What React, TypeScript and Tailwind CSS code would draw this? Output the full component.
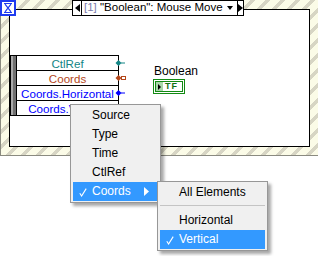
import React from "react";

function Check({ className }: { className?: string }) {
  return (
    <svg className={className} width="8" height="9" viewBox="0 0 8 9">
      <path d="M0.8 5.2 L2.6 8 L7.2 0.6" stroke="currentColor" strokeWidth="1.1" fill="none" />
    </svg>
  );
}

function Item({ label, hl, check, arrow }: { label: string; hl?: boolean; check?: boolean; arrow?: boolean }) {
  return (
    <div
      className={
        "relative h-[19px] leading-[19px] pl-[19px] whitespace-nowrap " +
        (hl ? "bg-[#3399ff] text-white" : "text-black")
      }
    >
      {check && <Check className="absolute left-[6px] top-[6px] text-white" />}
      {label}
      {arrow && (
        <svg className="absolute right-[9px] top-[5px]" width="5" height="9" viewBox="0 0 5 9">
          <path d="M0 0 L5 4.5 L0 9 Z" fill="#fff" />
        </svg>
      )}
    </div>
  );
}

export default function App() {
  return (
    <div className="relative w-[322px] h-[256px] bg-white overflow-hidden font-['Liberation_Sans',Arial,sans-serif] text-[12px] text-black">
      {/* structure frame */}
      <div className="absolute left-0 top-0 w-[318px] h-[156px] border-l border-b border-[#8a8a80] bg-[repeating-linear-gradient(135deg,#fbfbe7_0px,#fbfbe7_6.6px,#d7d5c4_6.6px,#d7d5c4_10.6px)]">
        <div className="absolute left-[8px] top-[9px] w-[301px] h-[138px] bg-white border border-black" />
      </div>

      {/* event icon */}
      <svg className="absolute left-0 top-0" width="16" height="16" viewBox="0 0 16 16">
        <rect width="16" height="16" fill="#1f3cf0" />
        <rect x="2" y="2" width="12" height="12" fill="#fff" />
        <path d="M4 3.5h8M4 12.5h8M5 4.2l6 7.6M11 4.2l-6 7.6" stroke="#1f3cf0" strokeWidth="1.2" fill="none" />
      </svg>

      {/* event selector */}
      <div className="absolute left-[72px] top-0 w-[172px] h-[16px] bg-white border border-black flex items-stretch">
        <div className="w-[9px] border-r border-black flex items-center justify-center">
          <svg width="5" height="8" viewBox="0 0 5 8">
            <path d="M5 0 V8 L0 4 Z" fill="#000" />
          </svg>
        </div>
        <div className="flex-1 flex items-center pl-[2px] text-[11.5px] leading-none whitespace-nowrap">
          <span className="text-[#7c7cae]">[1]</span>
          <span>&nbsp;"Boolean": Mouse Move</span>
          <svg className="ml-auto mr-[4px]" width="6" height="4" viewBox="0 0 6 4">
            <path d="M0 0 H6 L3 4 Z" fill="#000" />
          </svg>
        </div>
        <div className="w-[6px] border-l border-black flex items-center">
          <svg width="5" height="8" viewBox="0 0 5 8">
            <path d="M0 0 V8 L5 4 Z" fill="#000" />
          </svg>
        </div>
      </div>

      {/* event data node */}
      <div className="absolute left-[10px] top-[55px] w-[109px] h-[61px] border border-black flex bg-white">
        <div className="w-[6px] border-r border-black bg-[linear-gradient(90deg,#a9a9a9_0px,#a9a9a9_2px,#707070_2px)]" />
        <div className="flex-1 flex flex-col text-center text-[11.6px]">
          <div className="h-[15px] leading-[15px] border-b border-black text-[#128585]">CtlRef</div>
          <div className="h-[15px] leading-[15px] border-b border-black text-[#b4471b]">Coords</div>
          <div className="h-[15px] leading-[15px] border-b border-black text-[#0000ff]">Coords.Horizontal</div>
          <div className="h-[14px] leading-[15px] text-[#0000ff]">Coords.Vertical</div>
        </div>
      </div>

      {/* terminals */}
      <svg className="absolute left-[115px] top-[59px]" width="11" height="8" viewBox="0 0 11 8">
        <path d="M3.5 1 L6.5 4 L3.5 7 L0.5 4 Z" fill="#128585" />
        <path d="M6 4 H10" stroke="#128585" />
      </svg>
      <svg className="absolute left-[115px] top-[74px]" width="12" height="8" viewBox="0 0 12 8">
        <path d="M3.5 1 L6.5 4 L3.5 7 L0.5 4 Z" fill="#b4471b" />
        <rect x="6.5" y="2.5" width="4" height="3" fill="#fff" stroke="#b4471b" />
      </svg>
      <svg className="absolute left-[115px] top-[89px]" width="11" height="8" viewBox="0 0 11 8">
        <path d="M3.5 1 L6.5 4 L3.5 7 L0.5 4 Z" fill="#0000ff" />
        <path d="M6 4 H10" stroke="#0000ff" />
      </svg>

      {/* Boolean indicator */}
      <div className="absolute left-[154px] top-[64px] text-[12px] leading-[14px]">Boolean</div>
      <div className="absolute left-[153px] top-[79px] w-[32px] h-[15px] border border-[#138a13] bg-white p-[1px]">
        <div className="w-full h-full border border-[#138a13] flex items-center">
          <div className="w-[7px] h-full bg-[#a9d7a9] flex items-center justify-center">
            <svg width="3" height="6" viewBox="0 0 3 6">
              <path d="M0 0 L3 3 L0 6 Z" fill="#000" />
            </svg>
          </div>
          <span className="ml-[2px] text-[9px] font-bold text-[#137013] leading-none tracking-[1px]">TF</span>
        </div>
      </div>

      {/* context menu */}
      <div className="absolute left-[70px] top-[104px] w-[91px] bg-[#f0f0f0] border border-[#979797] px-[2px] py-[1px] shadow-[3px_3px_3px_rgba(0,0,0,0.35)]">
        <Item label="Source" />
        <Item label="Type" />
        <Item label="Time" />
        <Item label="CtlRef" />
        <Item label="Coords" hl check arrow />
      </div>

      {/* submenu */}
      <div className="absolute left-[157px] top-[181px] w-[111px] bg-[#f0f0f0] border border-[#979797] px-[2px] py-[1px] shadow-[3px_3px_3px_rgba(0,0,0,0.35)]">
        <Item label="All Elements" />
        <div className="h-[9px] pt-[3px]">
          <div className="border-t border-[#c4c4c4]" />
        </div>
        <Item label="Horizontal" />
        <Item label="Vertical" hl check />
      </div>
    </div>
  );
}
